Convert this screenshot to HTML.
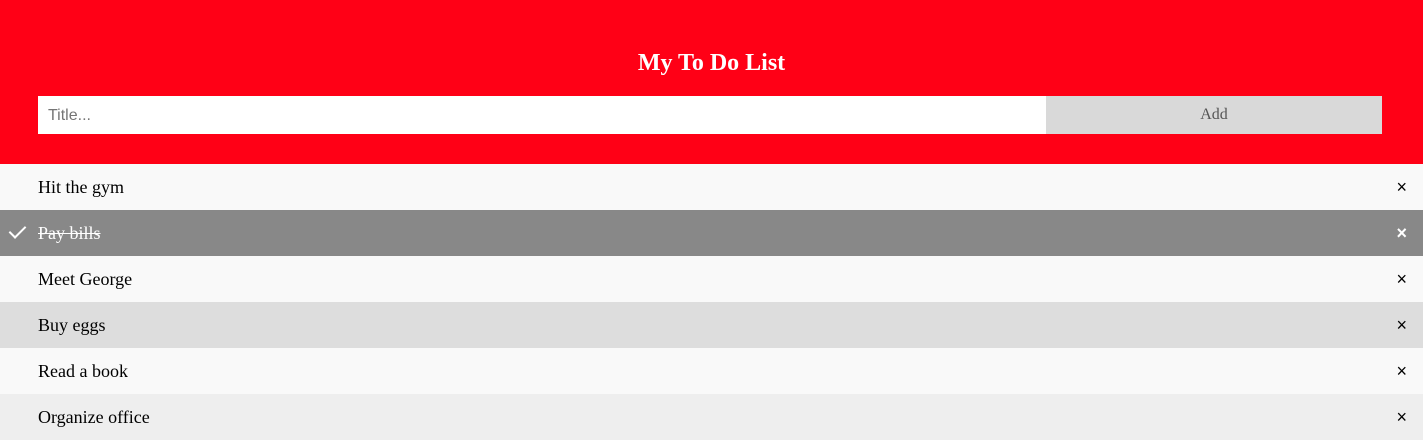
<!DOCTYPE html>
<html><head><style>
body{margin:0;width:1423px;height:435px;overflow:hidden;font-family:"Liberation Serif",serif;}
.header{background:#ff0016;height:164px;position:relative;}
.header h2{margin:0;position:absolute;top:50px;left:0;right:0;text-align:center;color:#fff;font-size:24px;font-weight:bold;}
.inp{position:absolute;left:38px;top:96px;width:1008px;height:38px;background:#fff;font-family:"Liberation Sans",sans-serif;font-size:16px;color:#757575;line-height:40px;box-sizing:border-box;padding-left:10px;}
.add{position:absolute;left:1046px;top:96px;width:336px;height:38px;background:#d9d9d9;color:#555;font-size:16px;text-align:center;line-height:38px;}
ul{margin:0;padding:0;list-style:none;}
li{height:46px;line-height:47px;padding-left:38px;font-size:18px;position:relative;color:#000;}
li .x{position:absolute;right:16px;top:0;font-family:"Liberation Sans",sans-serif;font-size:18px;}
.o{background:#f9f9f9}.e{background:#eee}
.c{background:#888;color:#fff;text-decoration:line-through;}
.c .x{color:#fff;font-weight:bold}
.h{background:#ddd}
.chk{position:absolute;left:13px;top:12px;width:7px;height:14px;border:solid #fff;border-width:0 2px 2px 0;transform:rotate(45deg);}
</style></head><body>
<div class="header"><h2>My To Do List</h2><div class="inp">Title...</div><div class="add">Add</div></div>
<ul>
<li class="o">Hit the gym<span class="x">×</span></li>
<li class="c"><span class="chk"></span>Pay bills<span class="x" style="text-decoration:none">×</span></li>
<li class="o">Meet George<span class="x">×</span></li>
<li class="h">Buy eggs<span class="x">×</span></li>
<li class="o">Read a book<span class="x">×</span></li>
<li class="e">Organize office<span class="x">×</span></li>
</ul>
</body></html>
